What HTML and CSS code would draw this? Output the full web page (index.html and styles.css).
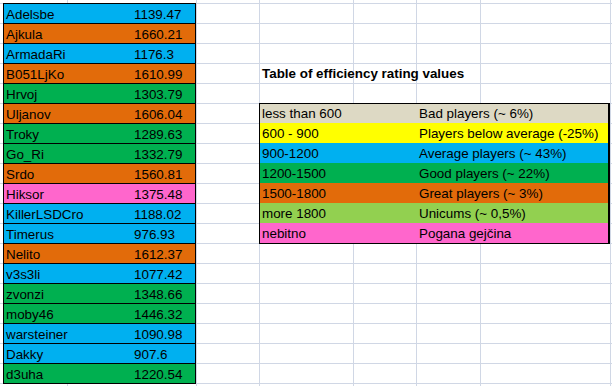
FILE: index.html
```html
<!DOCTYPE html>
<html>
<head>
<meta charset="utf-8">
<link rel="stylesheet" href="styles.css">
</head>
<body>
<div class="sheet">
  <div class="players">
    <div class="row blue"><span class="name">Adelsbe</span><span class="val">1139.47</span></div>
    <div class="row orange"><span class="name">Ajkula</span><span class="val">1660.21</span></div>
    <div class="row blue"><span class="name">ArmadaRi</span><span class="val">1176.3</span></div>
    <div class="row orange"><span class="name">B051LjKo</span><span class="val">1610.99</span></div>
    <div class="row green"><span class="name">Hrvoj</span><span class="val">1303.79</span></div>
    <div class="row orange"><span class="name">Uljanov</span><span class="val">1606.04</span></div>
    <div class="row green"><span class="name">Troky</span><span class="val">1289.63</span></div>
    <div class="row green"><span class="name">Go_Ri</span><span class="val">1332.79</span></div>
    <div class="row orange"><span class="name">Srdo</span><span class="val">1560.81</span></div>
    <div class="row pink"><span class="name">Hiksor</span><span class="val">1375.48</span></div>
    <div class="row blue"><span class="name">KillerLSDCro</span><span class="val">1188.02</span></div>
    <div class="row blue"><span class="name">Timerus</span><span class="val">976.93</span></div>
    <div class="row orange"><span class="name">Nelito</span><span class="val">1612.37</span></div>
    <div class="row blue"><span class="name">v3s3li</span><span class="val">1077.42</span></div>
    <div class="row green"><span class="name">zvonzi</span><span class="val">1348.66</span></div>
    <div class="row green"><span class="name">moby46</span><span class="val">1446.32</span></div>
    <div class="row blue"><span class="name">warsteiner</span><span class="val">1090.98</span></div>
    <div class="row blue"><span class="name">Dakky</span><span class="val">907.6</span></div>
    <div class="row green"><span class="name">d3uha</span><span class="val">1220.54</span></div>
  </div>
  <div class="side">
    <div class="title">Table of efficiency rating values</div>
    <div class="legend">
      <div class="lrow beige"><span class="range">less than 600</span><span class="desc">Bad players (~ 6%)</span></div>
      <div class="lrow yellow"><span class="range">600 - 900</span><span class="desc">Players below average (-25%)</span></div>
      <div class="lrow blue"><span class="range">900-1200</span><span class="desc">Average players (~ 43%)</span></div>
      <div class="lrow green"><span class="range">1200-1500</span><span class="desc">Good players (~ 22%)</span></div>
      <div class="lrow orange"><span class="range">1500-1800</span><span class="desc">Great players (~ 3%)</span></div>
      <div class="lrow lime"><span class="range">more 1800</span><span class="desc">Unicums (~ 0,5%)</span></div>
      <div class="lrow pink"><span class="range">nebitno</span><span class="desc">Pogana gejčina</span></div>
    </div>
  </div>
</div>
</body>
</html>
```
FILE: styles.css
```css
html, body {
  margin: 0;
  padding: 0;
  background: #fff;
}

body {
  font-family: "Liberation Sans", Arial, sans-serif;
  font-size: 13.4px;
  color: #000;
}

.sheet {
  box-sizing: border-box;
  width: 612px;
  height: 386px;
  overflow: hidden;
  display: flex;
  align-items: flex-start;
  padding: 3px 0 0 3px;
  background:
    linear-gradient(#d0d7e5, #d0d7e5) 67px 0 / 1px 100% no-repeat,
    linear-gradient(#d0d7e5, #d0d7e5) 196px 0 / 1px 100% no-repeat,
    linear-gradient(#d0d7e5, #d0d7e5) 259px 0 / 1px 100% no-repeat,
    linear-gradient(#d0d7e5, #d0d7e5) 353px 0 / 1px 100% no-repeat,
    linear-gradient(#d0d7e5, #d0d7e5) 416px 0 / 1px 100% no-repeat,
    linear-gradient(#d0d7e5, #d0d7e5) 480px 0 / 1px 100% no-repeat,
    linear-gradient(#d0d7e5, #d0d7e5) 610px 0 / 1px 100% no-repeat,
    linear-gradient(#d0d7e5 0 1px, transparent 1px) 0 3px / 100% 20px repeat,
    #fff;
}

/* player table */
.players {
  width: 193px;
  box-sizing: border-box;
  border: 1px solid #000;
  border-bottom: none;
}

.row {
  display: grid;
  grid-template-columns: 128px 63px;
  height: 20px;
  box-sizing: border-box;
  border-bottom: 1px solid #000;
}

.row span {
  line-height: 19px;
  padding: 1px 0 0 2px;
  white-space: nowrap;
  overflow: hidden;
}

/* right side */
.side {
  margin-left: 63px;
  width: 351px;
  display: flex;
  flex-direction: column;
}

.title {
  margin-top: 60px;
  height: 20px;
  line-height: 18px;
  padding: 2px 0 0 3px;
  box-sizing: border-box;
  font-weight: bold;
  white-space: nowrap;
}

.legend {
  margin-top: 20px;
  border: 1px solid #000;
  border-right-width: 2px;
  box-sizing: border-box;
}

.lrow {
  display: grid;
  grid-template-columns: 156px 1fr;
  height: 20px;
  box-sizing: border-box;
}

.lrow:first-child {
  height: 19px;
}

.lrow span {
  line-height: 18px;
  padding: 2px 0 0 2px;
  white-space: nowrap;
  overflow: hidden;
}

.lrow:first-child span {
  padding-top: 1px;
}

.lrow .desc {
  padding-left: 3px;
}

/* fills */
.blue   { background: #00b0f0; }
.orange { background: #e26b0a; }
.green  { background: #00b050; }
.pink   { background: #ff66cc; }
.beige  { background: #ddd9c4; }
.yellow { background: #ffff00; }
.lime   { background: #92d050; }
```
